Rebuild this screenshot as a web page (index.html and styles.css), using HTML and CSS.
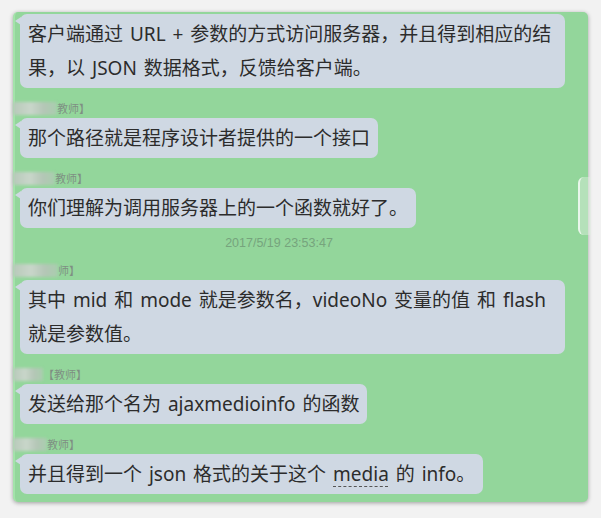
FILE: index.html
```html
<!DOCTYPE html>
<html lang="zh-CN">
<head>
<meta charset="utf-8">
<link rel="stylesheet" href="styles.css">
</head>
<body>
<div class="panel">
  <div class="bubble full">客户端通过 URL + 参数的方式访问服务器，并且得到相应的结<br>果，以 JSON 数据格式，反馈给客户端。</div>
  <div class="name"><span class="blur w44"></span><span class="role">教师】</span></div>
  <div class="bubble">那个路径就是程序设计者提供的一个接口</div>
  <div class="name"><span class="blur w42"></span><span class="role">教师】</span></div>
  <div class="bubble">你们理解为调用服务器上的一个函数就好了。</div>
  <div class="time">2017/5/19 23:53:47</div>
  <div class="name"><span class="blur w45"></span><span class="role">师】</span></div>
  <div class="bubble full">其中 mid 和 mode 就是参数名，videoNo 变量的值 和 flash<br>就是参数值。</div>
  <div class="name"><span class="blur w30"></span><span class="role">【教师】</span></div>
  <div class="bubble">发送给那个名为 ajaxmedioinfo 的函数</div>
  <div class="name"><span class="blur w34"></span><span class="role">教师】</span></div>
  <div class="bubble">并且得到一个 json 格式的关于这个 <span class="dash">media</span> 的 info。</div>
  <div class="thumb"></div>
</div>
</body>
</html>
```

FILE: styles.css
```css
html, body {
  margin: 0;
  padding: 0;
  background: #f2f2f2;
}
body {
  width: 601px;
  height: 518px;
  overflow: hidden;
  padding: 12px 0 0 13px;
  box-sizing: border-box;
  font-family: "Noto Sans", "Noto Sans CJK SC", sans-serif;
}
.panel {
  position: relative;
  width: 575px;
  height: 490px;
  box-sizing: border-box;
  padding: 2px 0 0 0;
  background: #93d69b;
  border-radius: 5px;
  border-left: 2px solid #a3e3aa;
  box-shadow: 0 1px 4px rgba(0, 0, 0, 0.35);
  display: flex;
  flex-direction: column;
  align-items: flex-start;
}
.bubble {
  position: relative;
  margin-left: 5px;
  padding: 3px 8px;
  background: #cfd8e3;
  border-radius: 7px;
  color: #2c2c2c;
  font-size: 19px;
  line-height: 34px;
  word-spacing: 2px;
  white-space: nowrap;
  width: fit-content;
  box-sizing: border-box;
}
.bubble::before {
  content: "";
  position: absolute;
  left: -5px;
  top: 3px;
  width: 0;
  height: 0;
  border-top: 4px solid transparent;
  border-right: 6px solid #cfd8e3;
  border-bottom: 4px solid transparent;
}
.bubble.full {
  width: 545px;
}
.name {
  height: 30px;
  box-sizing: border-box;
  padding-top: 10px;
  display: flex;
  align-items: center;
  line-height: 14px;
}
.blur {
  display: block;
  height: 13px;
  margin-left: -2px;
  background: linear-gradient(90deg, #b7c9b9 0%, #c9d6ca 40%, #b4c6b6 70%, #a9cdae 100%);
  filter: blur(1.6px);
}
.w44 { width: 44px; }
.w42 { width: 42px; }
.w45 { width: 45px; }
.w30 { width: 30px; }
.w34 { width: 34px; }
.role {
  font-size: 11px;
  color: #7f8f83;
  font-family: "Noto Sans CJK SC", sans-serif;
}
.time {
  align-self: stretch;
  margin-top: 8px;
  height: 14px;
  line-height: 14px;
  padding-right: 45px;
  text-align: center;
  font-family: "Liberation Sans", sans-serif;
  font-size: 12.5px;
  color: #76a47d;
}
.dash {
  text-decoration: underline dashed #555;
  text-decoration-thickness: 1px;
  text-underline-offset: 5px;
}
.thumb {
  position: absolute;
  right: -3px;
  top: 165px;
  width: 11px;
  height: 58px;
  border-radius: 6px 0 0 6px;
  border-left: 2px solid rgba(255, 255, 255, 0.7);
  background: rgba(225, 240, 225, 0.45);
}
```
